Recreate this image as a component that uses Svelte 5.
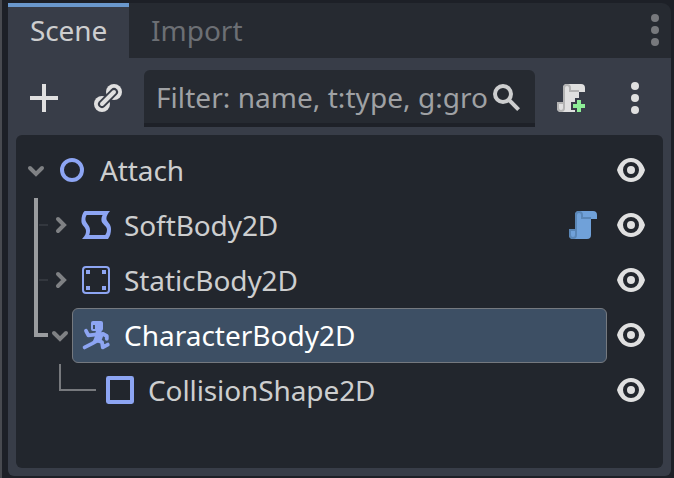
<script>
  const rows = [
    { name: 'Attach', icon: 'node', lead: 32, arrow: 'down', ax: 20 },
    { name: 'SoftBody2D', icon: 'soft', lead: 56, arrow: 'right', ax: 44, trunk: 55, tick: true, script: true },
    { name: 'StaticBody2D', icon: 'static', lead: 56, arrow: 'right', ax: 44, trunk: 55, tick: true },
    { name: 'CharacterBody2D', icon: 'character', lead: 56, arrow: 'down', ax: 44, trunk: 29, selected: true },
    { name: 'CollisionShape2D', icon: 'shape', lead: 80, elbow: true }
  ];
</script>

{#snippet dots()}
  <svg class="icon" viewBox="0 0 16 16">
    <circle cx="8" cy="2" r="2" /><circle cx="8" cy="8" r="2" /><circle cx="8" cy="14" r="2" />
  </svg>
{/snippet}

<div class="dock">
  <div class="tabs">
    <div class="tab active">Scene</div>
    <div class="tab">Import</div>
    <div class="tabmenu">{@render dots()}</div>
  </div>

  <div class="toolbar">
    <svg class="icon add" viewBox="0 0 16 16"><path d="M7 1h2v6h6v2H9v6H7V9H1V7h6z" /></svg>
    <svg class="icon link" viewBox="0 0 16 16">
      <circle cx="11" cy="5" r="4" /><circle cx="5" cy="11" r="4" />
      <path d="M5 11l6-6" stroke="#383d48" stroke-width="4" stroke-linecap="round" />
      <path d="M5 11l6-6" stroke="#e0e0e0" stroke-width="2" stroke-linecap="round" />
    </svg>
    <div class="filter">
      <span>Filter: name, t:type, g:gro</span>
      <svg class="icon search" viewBox="0 0 16 16">
        <circle cx="6" cy="6" r="4" fill="none" stroke="#cdcecf" stroke-width="2" />
        <path d="M9 9l4.800 4.800" stroke="#cdcecf" stroke-width="2" />
      </svg>
    </div>
    <svg class="icon create" viewBox="0 0 16 16">
      <path d="M6 1a2 2 0 0 0-2 2v7H1v3a2 2 0 0 0 2 2h7v-1H8v-4h2V8h2V5h3V3a2 2 0 0 0-2-2z" />
      <path fill="#b4b4b4" d="M6 1a2 2 0 0 0-2 2v7H1v3a2 2 0 0 0 4 0V3a1 1 0 0 1 2 0v2h5V4H8V3a2 2 0 0 0-2-2zM2 11h2v2a1 1 0 0 1-2 0z" fill-rule="evenodd" />
      <path fill="#8eef97" d="M11 9h2v2h2v2h-2v2h-2v-2H9v-2h2z" />
    </svg>
    <div class="more">{@render dots()}</div>
  </div>

  <div class="content">
    <div class="tree">
      {#each rows as row}
        <div class="row">
          <svg class="lead" width={row.lead} height="55" fill="none">
            {#if row.trunk}<rect x="18" y="0" width="4" height={row.trunk} fill="#9a9c9f" />{/if}
            {#if row.selected}<rect x="18" y="25" width="14" height="4" fill="#9a9c9f" />{/if}
            {#if row.tick}<rect x="23" y="26" width="9" height="2" fill="#33373e" />{/if}
            {#if row.elbow}<path d="M44 1v26h36" stroke="#77797d" stroke-width="2" />{/if}
            {#if row.arrow === 'down'}
              <path d="M{row.ax - 6} 25l6 6 6-6" class="arrow" />
            {:else if row.arrow === 'right'}
              <path d="M{row.ax - 2} 21l6 6-6 6" class="arrow" />
            {/if}
          </svg>
          <div class="item" class:selected={row.selected}>
            <svg class="icon type" viewBox="0 0 16 16">
              {#if row.icon === 'node'}
                <circle cx="8" cy="8" r="5" fill="none" stroke="#8da5f3" stroke-width="2" />
              {:else if row.icon === 'soft'}
                <path fill-rule="evenodd" d="M2.300 1H15C14 2.200 13.200 3.500 13.200 4.700c0 1.800 2.300 2.300 2.300 5.300 0 2-.400 3.500-1.500 5H1c1-1.200 2-2 2-4 0-2-2.300-2.600-2.300-5 0-2 .500-4 1.600-5zM3.300 3C2.900 3.700 2.700 4.300 2.700 5 2.700 7 5 8 5 10.500c0 1-.100 1.700-.400 2.500h8c.600-.900.900-1.700.900-2.800C13.500 8.500 10.700 7.500 10.700 5.500c0-1 .200-1.700.600-2.500z" />
              {:else if row.icon === 'static'}
                <rect x="1.500" y="1.500" width="13" height="13" rx="1.500" fill="none" stroke="#8da5f3" />
                <path d="M3 3h2v2H3zM11 3h2v2h-2zM3 11h2v2H3zM11 11h2v2h-2z" />
              {:else if row.icon === 'character'}
                <path fill-rule="evenodd" d="M6.500 1h4a1 1 0 0 1 1 1v3a1 1 0 0 1-1 1h-4a1 1 0 0 1-1-1V2a1 1 0 0 1 1-1zM6.500 3v2h1V3z" />
                <path d="M8 5.500h2.800v1.200h1.400L10.500 11.500 8 12 6.500 11l1-2.500z" />
                <path fill="none" stroke="#8da5f3" stroke-width="1.900" stroke-linecap="round" stroke-linejoin="round" d="M3 5.900L4.200 8.200 8.500 7.700M11.500 7.500l1.900 1v1.400M8 11.200L6 12.300 2.300 14.200M9 10.800l2 .800.400 2.600 2.500-1.400" />
              {:else}
                <rect x="2" y="2" width="12" height="12" rx=".2" fill="none" stroke="#8da5f3" stroke-width="2" stroke-linejoin="round" />
              {/if}
            </svg>
            <span class="name">{row.name}</span>
            {#if row.script}
              <svg class="icon script" viewBox="0 0 16 16">
                <path d="M6 1a2 2 0 0 0-2 2v7H1v3a2 2 0 0 0 2 2h7a2 2 0 0 0 2-2V5h3V3a2 2 0 0 0-2-2z" />
                <path fill="#5a86b6" fill-rule="evenodd" d="M6 1a2 2 0 0 0-2 2v7H1v3a2 2 0 0 0 4 0V3a1 1 0 0 1 2 0v2h5V4H8V3a2 2 0 0 0-2-2zM2 11h2v2a1 1 0 0 1-2 0z" />
              </svg>
            {/if}
          </div>
          <div class="eye">
            <svg class="icon" viewBox="0 0 16 16">
              <path fill-rule="evenodd" d="M8 2C4.500 2 2 4.500 1 8c1 3.500 3.500 6 7 6s6-2.500 7-6c-1-3.500-3.500-6-7-6zm0 2a4 4 0 0 1 0 8 4 4 0 0 1 0-8zm0 2a2 2 0 0 0 0 4 2 2 0 0 0 0-4z" />
            </svg>
          </div>
        </div>
      {/each}
    </div>
  </div>
</div>

<style>
  :global(body) {
    background: #1d2027;
  }
  .dock {
    box-sizing: border-box;
    width: 674px;
    height: 478px;
    padding: 3px 3px 2px 6px;
    border-left: 2px solid #484a50;
    display: flex;
    flex-direction: column;
    font-family: 'Noto Sans', sans-serif;
    font-size: 28px;
    color: #cdcecf;
    background: #1d2027;
  }
  .icon {
    display: block;
    flex: none;
    width: 32px;
    height: 32px;
    fill: #e0e0e0;
    overflow: visible;
  }
  .tabs {
    display: flex;
    flex: none;
    height: 55px;
    background: #262a31;
    border-radius: 0 9px 0 0;
  }
  .tab {
    box-sizing: border-box;
    height: 55px;
    padding: 0 22px;
    line-height: 54px;
    color: #6c6f74;
  }
  .tab.active {
    width: 121px;
    line-height: 46px;
    letter-spacing: -0.1px;
    color: #cdcecf;
    background: #383d48;
    border-top: 4px solid #6a98cd;
  }
  .tabmenu {
    margin: 11px 0 0 auto;
  }
  .tabmenu .icon {
    fill: #77797d;
  }
  .toolbar {
    display: flex;
    flex: none;
    align-items: flex-start;
    height: 77px;
    padding: 24px 20px 0;
    box-sizing: border-box;
    background: #383d48;
  }
  .link {
    margin-left: 32px;
  }
  .filter {
    box-sizing: border-box;
    display: flex;
    width: 391px;
    height: 57px;
    margin: -12px 20px 0;
    padding-left: 12px;
    background: #262a31;
    border-bottom: 4px solid #1e2128;
    border-radius: 6px 6px 0 0;
    color: #9fa1a4;
    line-height: 54px;
    letter-spacing: 0.05px;
    white-space: nowrap;
  }
  .filter span {
    width: 335px;
  }
  .search {
    margin-top: 12px;
  }
  .more {
    margin-left: 32px;
  }
  .content {
    padding: 0 8px 8px;
    background: #383d48;
    border-radius: 0 0 6px 6px;
  }
  .tree {
    box-sizing: border-box;
    height: 333px;
    padding-top: 8px;
    background: #22262d;
    border-radius: 6px;
  }
  .row {
    display: flex;
    height: 55px;
  }
  .lead {
    flex: none;
  }
  .arrow {
    stroke: #7f8184;
    stroke-width: 4;
    stroke-linecap: round;
  }
  .item {
    box-sizing: border-box;
    display: flex;
    flex: 1;
    align-items: center;
    padding: 0 7px 1px;
    border: 1px solid transparent;
    border-radius: 6px;
    letter-spacing: -0.1px;
  }
  .item.selected {
    background: #3d4f64;
    border-color: #75797f;
    color: #fff;
    letter-spacing: 0;
  }
  .type {
    fill: #8da5f3;
  }
  .name {
    margin-left: 12px;
    line-height: 38px;
  }
  .script {
    margin-left: auto;
    fill: #70a1d9;
  }
  .eye {
    width: 56px;
    padding: 11px 0 0 8px;
    box-sizing: border-box;
  }
</style>
